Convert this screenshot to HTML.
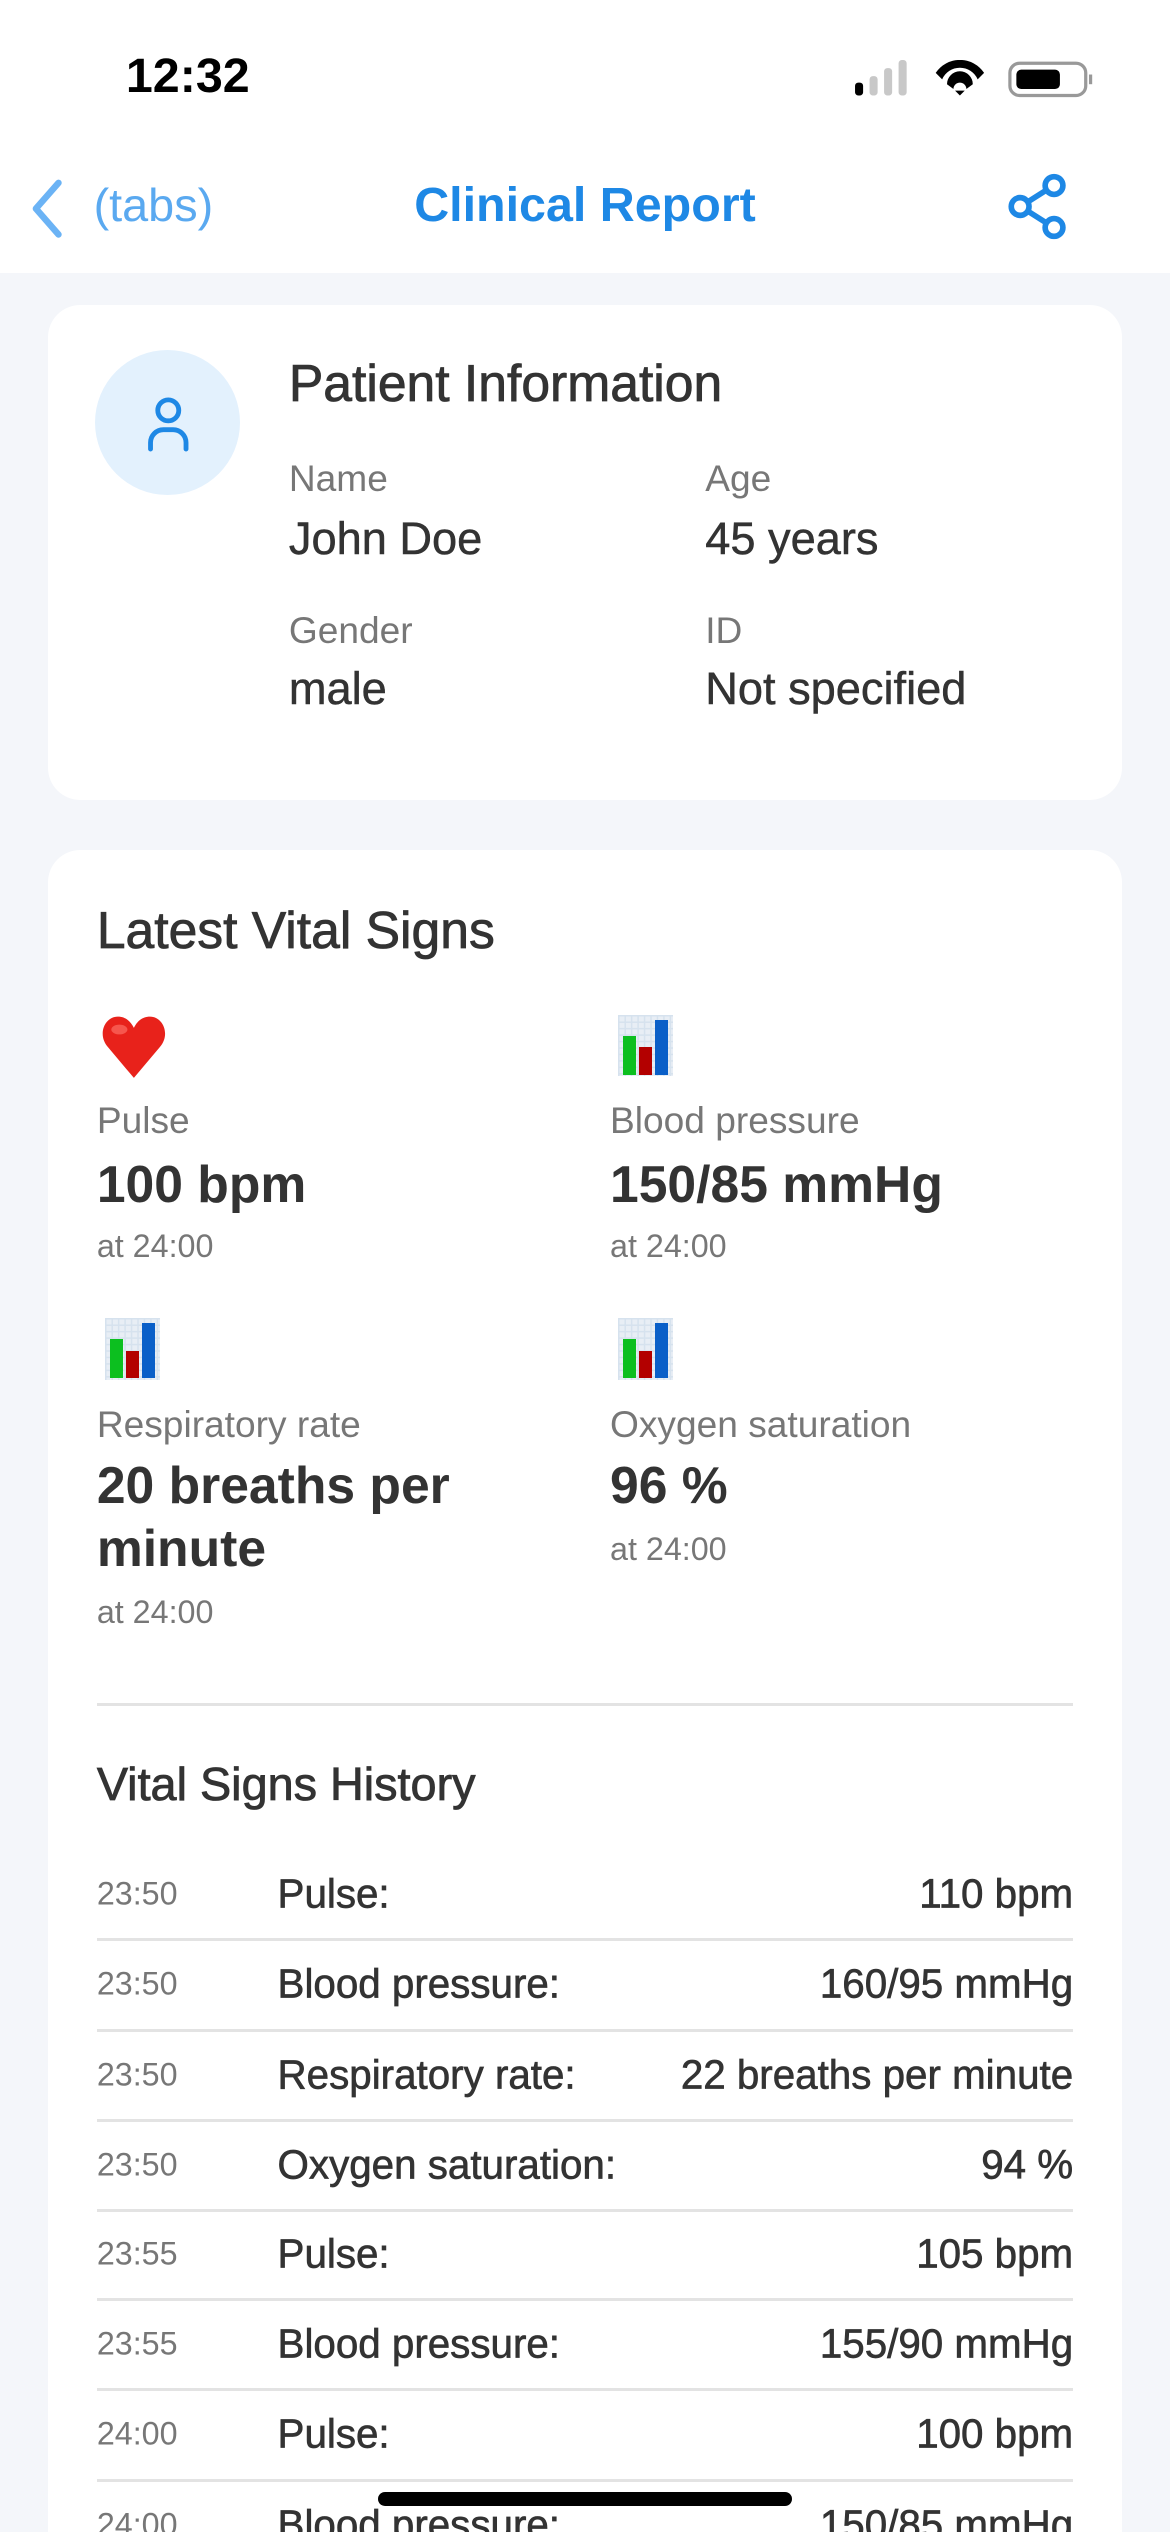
<!DOCTYPE html>
<html><head><meta charset="utf-8"><style>
html,body{margin:0;padding:0;background:#f4f6fa;}
body{width:1170px;height:2532px;overflow:hidden;}
#w{zoom:1.61379;width:725px;height:1569px;position:relative;overflow:hidden;font-family:"Liberation Sans",sans-serif;color:#333;}
.a{position:absolute;white-space:nowrap;line-height:1;}
.card{position:absolute;left:30px;width:665px;background:#fff;border-radius:20px;}
.lab{font-size:23px;color:#777;}
.val{font-size:28px;color:#333;-webkit-text-stroke:0.3px #333;}
.big{font-size:32px;font-weight:bold;color:#333;}
.sm{font-size:20px;color:#777;}
.med{-webkit-text-stroke:0.5px #333;}
.chart{position:absolute;width:34px;height:38px;background:#e8eef5;background-image:linear-gradient(#d6e2ee 1px,transparent 1px),linear-gradient(90deg,#d6e2ee 1px,transparent 1px);background-size:4px 4px;}
.chart i{position:absolute;bottom:1px;width:8px;}
.row{position:absolute;left:60px;width:605px;height:55px;border-bottom:2px solid #e3e3e3;}
.row span{position:absolute;top:50%;transform:translateY(-50%);white-space:nowrap;}
.t{left:0;font-size:20px;color:#777;}
.l{left:112px;font-size:25px;color:#333;-webkit-text-stroke:0.4px #333;}
.v{right:0;font-size:25px;color:#333;-webkit-text-stroke:0.4px #333;}
</style></head><body><div id="w">
<div class="a" style="left:0;top:0;width:725px;height:169px;background:#fff;"></div>
<div class="a" style="left:78px;top:32px;font-size:30px;font-weight:bold;color:#000;">12:32</div>
<svg class="a" style="left:530px;top:37px" width="150" height="24" viewBox="0 0 150 24">
<rect x="0" y="14" width="5" height="8" rx="2" fill="#000"/><rect x="9" y="10" width="5" height="12" rx="2" fill="#c8c8c8"/><rect x="18" y="5" width="5" height="17" rx="2" fill="#c8c8c8"/><rect x="27" y="0" width="5" height="22" rx="2" fill="#c8c8c8"/>
<path d="M50 8 A18 18 0 0 1 80 8 L76 12 A12 12 0 0 0 54 12 Z M57 15 A8 8 0 0 1 73 15 L69 18 A4 4 0 0 0 61 18 Z M62 19 L65 22 L68 19 Z" fill="#000"/>
<rect x="96" y="2" width="47" height="20" rx="6" fill="none" stroke="#999" stroke-width="2"/><rect x="100" y="6" width="27" height="12" rx="3" fill="#000"/><rect x="145" y="9" width="2" height="6" fill="#999"/>
</svg>
<svg class="a" style="left:14px;top:110px" width="28" height="38" viewBox="0 0 28 38"><path d="M22 3 L8 19 L22 35" fill="none" stroke="#6bb3f5" stroke-width="4" stroke-linecap="round" stroke-linejoin="round"/></svg>
<div class="a" style="left:58px;top:113px;font-size:29px;color:#5aa9f0;">(tabs)</div>
<div class="a" style="left:0;width:725px;text-align:center;top:112px;font-size:30px;font-weight:bold;color:#1e88e5;">Clinical Report</div>
<svg class="a" style="left:622px;top:106px" width="44" height="44" viewBox="0 0 44 44" fill="none" stroke="#1e88e5" stroke-width="3.5"><circle cx="31" cy="9" r="5.5"/><circle cx="10" cy="22" r="5.5"/><circle cx="31" cy="35" r="5.5"/><path d="M15 19 L26 12 M15 25 L26 32"/></svg>

<div class="card" style="top:189px;height:307px;"></div>
<div class="a" style="left:59px;top:217px;width:90px;height:90px;border-radius:50%;background:#e3f1fd;"></div>
<svg class="a" style="left:84px;top:242px" width="40" height="40" viewBox="0 0 40 40" fill="none" stroke="#1e88e5" stroke-width="3" stroke-linecap="round"><circle cx="20" cy="12" r="6.5"/><path d="M9 36 V32 A8 8 0 0 1 17 24 H23 A8 8 0 0 1 31 32 V36"/></svg>
<div class="a med" style="left:179px;top:222px;font-size:32px;color:#333;">Patient Information</div>
<div class="a lab" style="left:179px;top:285px;">Name</div>
<div class="a val" style="left:179px;top:320px;">John Doe</div>
<div class="a lab" style="left:437px;top:285px;">Age</div>
<div class="a val" style="left:437px;top:320px;">45 years</div>
<div class="a lab" style="left:179px;top:379px;">Gender</div>
<div class="a val" style="left:179px;top:413px;">male</div>
<div class="a lab" style="left:437px;top:379px;">ID</div>
<div class="a val" style="left:437px;top:413px;">Not specified</div>

<div class="card" style="top:527px;height:1042px;border-radius:20px 20px 0 0;"></div>
<div class="a med" style="left:60px;top:561px;font-size:32px;color:#333;">Latest Vital Signs</div>
<svg class="a" style="left:62px;top:629px" width="42" height="40" viewBox="0 0 42 40"><path d="M21 39 L5 20 C-2 12 3 1 11 1 C16 1 19 4 21 8 C23 4 26 1 31 1 C39 1 44 12 37 20 Z" fill="#e8221b"/><ellipse cx="12" cy="9" rx="5" ry="3" fill="#ff7a70" opacity=".6"/></svg>
<div class="chart" style="left:383px;top:629px"><i style="left:3px;height:24px;background:#0cbf1f"></i><i style="left:13px;height:17px;background:#b30000"></i><i style="left:23px;height:34px;background:#0a5fc8"></i></div>
<div class="chart" style="left:65px;top:817px"><i style="left:3px;height:24px;background:#0cbf1f"></i><i style="left:13px;height:17px;background:#b30000"></i><i style="left:23px;height:34px;background:#0a5fc8"></i></div>
<div class="chart" style="left:383px;top:817px"><i style="left:3px;height:24px;background:#0cbf1f"></i><i style="left:13px;height:17px;background:#b30000"></i><i style="left:23px;height:34px;background:#0a5fc8"></i></div>
<div class="a lab" style="left:60px;top:683px;">Pulse</div>
<div class="a big" style="left:60px;top:718px;">100 bpm</div>
<div class="a sm" style="left:60px;top:762px;">at 24:00</div>
<div class="a lab" style="left:378px;top:683px;">Blood pressure</div>
<div class="a big" style="left:378px;top:718px;">150/85 mmHg</div>
<div class="a sm" style="left:378px;top:762px;">at 24:00</div>
<div class="a lab" style="left:60px;top:871px;">Respiratory rate</div>
<div class="a big" style="left:60px;top:905px;">20 breaths per</div>
<div class="a big" style="left:60px;top:944px;">minute</div>
<div class="a sm" style="left:60px;top:989px;">at 24:00</div>
<div class="a lab" style="left:378px;top:871px;">Oxygen saturation</div>
<div class="a big" style="left:378px;top:905px;">96 %</div>
<div class="a sm" style="left:378px;top:950px;">at 24:00</div>
<div class="a" style="left:60px;top:1055px;width:605px;height:2px;background:#e3e3e3;"></div>
<div class="a med" style="left:60px;top:1091px;font-size:29px;color:#333;">Vital Signs History</div>
<div class="row" style="top:1146px"><span class="t">23:50</span><span class="l">Pulse:</span><span class="v">110 bpm</span></div>
<div class="row" style="top:1202px"><span class="t">23:50</span><span class="l">Blood pressure:</span><span class="v">160/95 mmHg</span></div>
<div class="row" style="top:1258px"><span class="t">23:50</span><span class="l">Respiratory rate:</span><span class="v">22 breaths per minute</span></div>
<div class="row" style="top:1314px"><span class="t">23:50</span><span class="l">Oxygen saturation:</span><span class="v">94 %</span></div>
<div class="row" style="top:1369px"><span class="t">23:55</span><span class="l">Pulse:</span><span class="v">105 bpm</span></div>
<div class="row" style="top:1425px"><span class="t">23:55</span><span class="l">Blood pressure:</span><span class="v">155/90 mmHg</span></div>
<div class="row" style="top:1481px"><span class="t">24:00</span><span class="l">Pulse:</span><span class="v">100 bpm</span></div>
<div class="row" style="top:1537px"><span class="t">24:00</span><span class="l">Blood pressure:</span><span class="v">150/85 mmHg</span></div>
<div class="a" style="left:234px;top:1544px;width:257px;height:9px;border-radius:5px;background:#000;"></div>
</div></body></html>
